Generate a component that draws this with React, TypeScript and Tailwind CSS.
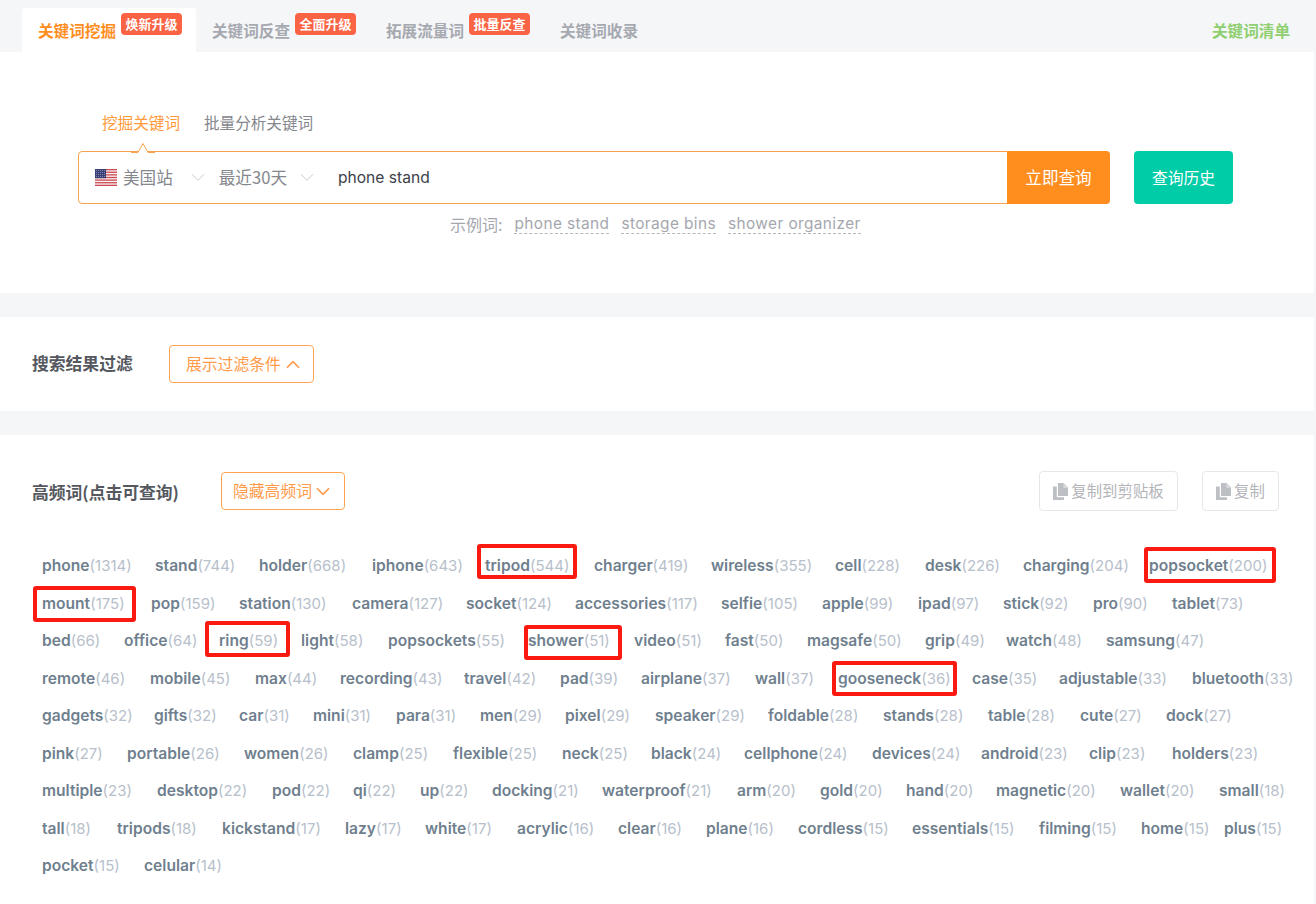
import React from "react";

const cjk = "font-['Noto_Sans_CJK_SC','Noto_Sans',sans-serif]";
const latin = "font-['Inter','Noto_Sans_CJK_SC',sans-serif]";

type W = [string, number, number];
const rows: W[][] = [
  [["phone",1314,42],["stand",744,155],["holder",668,259],["iphone",643,372],["tripod",544,485],["charger",419,594],["wireless",355,711],["cell",228,835],["desk",226,925],["charging",204,1023],["popsocket",200,1149]],
  [["mount",175,42],["pop",159,151],["station",130,239],["camera",127,352],["socket",124,466],["accessories",117,575],["selfie",105,721],["apple",99,822],["ipad",97,918],["stick",92,1003],["pro",90,1093],["tablet",73,1172]],
  [["bed",66,42],["office",64,124],["ring",59,219],["light",58,301],["popsockets",55,388],["shower",51,528],["video",51,634],["fast",50,725],["magsafe",50,807],["grip",49,925],["watch",48,1006],["samsung",47,1106]],
  [["remote",46,42],["mobile",45,150],["max",44,255],["recording",43,340],["travel",42,464],["pad",39,560],["airplane",37,641],["wall",37,755],["gooseneck",36,838],["case",35,972],["adjustable",33,1059],["bluetooth",33,1192]],
  [["gadgets",32,42],["gifts",32,154],["car",31,239],["mini",31,313],["para",31,396],["men",29,480],["pixel",29,565],["speaker",29,655],["foldable",28,768],["stands",28,883],["table",28,988],["cute",27,1080],["dock",27,1166]],
  [["pink",27,42],["portable",26,127],["women",26,244],["clamp",25,353],["flexible",25,453],["neck",25,562],["black",24,651],["cellphone",24,744],["devices",24,872],["android",23,981],["clip",23,1089],["holders",23,1172]],
  [["multiple",23,42],["desktop",22,157],["pod",22,272],["qi",22,353],["up",22,420],["docking",21,492],["waterproof",21,602],["arm",20,737],["gold",20,820],["hand",20,906],["magnetic",20,996],["wallet",20,1120],["small",18,1219]],
  [["tall",18,42],["tripods",18,117],["kickstand",17,222],["lazy",17,345],["white",17,425],["acrylic",16,517],["clear",16,618],["plane",16,706],["cordless",15,798],["essentials",15,912],["filming",15,1039],["home",15,1141],["plus",15,1224]],
  [["pocket",15,42],["celular",14,144]],
];

const boxes: Record<string, [number, number, number, number]> = {
  tripod: [-8, -3, 100, 35],
  popsocket: [-5, 0, 132, 36],
  mount: [-9, 1, 103, 36],
  ring: [-14, -1, 85, 36],
  shower: [-4, 3, 98, 35],
  gooseneck: [-6, 1, 125, 35],
};

function Flag() {
  const stripes = [0, 2, 4, 6, 8, 10, 12];
  return (
    <svg width="22" height="17" viewBox="0 0 22 17" className="shrink-0">
      <rect width="22" height="17" fill="#f7f3f3" />
      {stripes.map((i) => (
        <rect key={i} y={(i * 17) / 13} width="22" height={17 / 13} fill="#cf4a52" />
      ))}
      <rect width="11" height="9.2" fill="#3b3f78" />
      {[1.5, 3.5, 5.5, 7.5].map((y) =>
        [1.5, 3.5, 5.5, 7.5, 9.5].map((x) => <circle key={`${x}-${y}`} cx={x} cy={y} r="0.45" fill="#c9cbe0" />)
      )}
    </svg>
  );
}

function CopyIcon() {
  return (
    <svg width="15" height="17" viewBox="0 0 15 17" className="shrink-0" fill="#bcbfc4">
      <path d="M5 0h5.5L15 4.5V13H5z" />
      <path d="M0 3.5h3.8V14.2H11V17H0z" />
      <path d="M10.4 0.6V4.8H14.6" fill="#dcdee1" />
    </svg>
  );
}

function Caret({ up, thin }: { up?: boolean; thin?: boolean }) {
  return (
    <svg width="14" height="9" viewBox="0 0 14 9" className="shrink-0" fill="none">
      <path
        d={up ? "M1 7.8 7 1.6l6 6.2" : "M1 1.2 7 7.4l6-6.2"}
        stroke={thin ? "#c8ccd2" : "#ff9a4a"}
        strokeWidth={thin ? 1 : 1.6}
      />
    </svg>
  );
}

function Tab({ label, badge, active }: { label: string; badge?: string; active?: boolean }) {
  return (
    <div className={`flex h-[44px] w-[174px] shrink-0 items-start pl-4 rounded-t-[3px] ${active ? "bg-white" : ""}`}>
      <span className={`mt-[10px] text-[15.6px] leading-[24px] font-bold ${active ? "text-[#ff8e1f]" : "text-[#a6a9b0]"}`}>{label}</span>
      {badge && (
        <span className="ml-[5px] mt-[5px] flex h-[22px] w-[61px] items-center justify-center rounded-[4px] bg-[#fa6344] text-[13px] font-bold text-white">
          {badge}
        </span>
      )}
    </div>
  );
}

function Example({ children }: { children: string }) {
  return (
    <span className={`${latin} border-b border-dashed border-[#b5b7bd] text-[15.4px] leading-[18px] tracking-[0.4px] text-[#a5a7ae]`}>{children}</span>
  );
}

function Word({ w, next }: { w: W; next?: number }) {
  const box = boxes[w[0]];
  return (
    <div className="relative shrink-0 whitespace-nowrap" style={next ? { width: next - w[2] } : undefined}>
      <span className="text-[15.6px] font-semibold text-[#6f7f8e]">{w[0]}</span>
      <span className="font-normal text-[#b7c0cb]">({w[1]})</span>
      {box && (
        <div
          className="absolute rounded-[3px] border-[4px] border-[#fb1a10]"
          style={{ left: box[0], top: box[1], width: box[2], height: box[3] }}
        />
      )}
    </div>
  );
}

export default function App() {
  return (
    <div className={`${cjk} min-h-[904px] w-[1316px] overflow-hidden bg-[#f5f6f8]`}>
      <div className="flex h-[52px] items-end pl-[22px]">
        <Tab label="关键词挖掘" badge="焕新升级" active />
        <Tab label="关键词反查" badge="全面升级" />
        <Tab label="拓展流量词" badge="批量反查" />
        <Tab label="关键词收录" />
        <span className="mb-[10px] ml-auto mr-[26px] text-[15.6px] leading-[24px] font-bold text-[#8fcf6f]">关键词清单</span>
      </div>

      <section className="mr-[2px] h-[241px] bg-white pl-[78px] pt-[58px]">
        <div className="flex h-[41px] gap-6 pl-6 text-[15.6px] leading-[24px]">
          <span className="text-[#ff9a3d]">挖掘关键词</span>
          <span className="text-[#85878d]">批量分析关键词</span>
        </div>
        <div className="flex h-[53px] gap-6">
          <div className="relative flex w-[1032px] overflow-visible rounded-[4px] border border-[#f6a251]">
            <svg width="24" height="11" viewBox="0 0 24 11" className="absolute left-[52px] top-[-10px]">
              <path d="M0 10.5h7L12 1.5l5 9h7" fill="#fff" stroke="#f6a251" strokeWidth="1" />
            </svg>
            <div className="flex min-w-0 flex-1 items-center pl-4 text-[16.6px] text-[#85878d]">
              <Flag />
              <span className="ml-[6px]">美国站</span>
              <span className="ml-[18px]"><Caret thin /></span>
              <span className="ml-[14px]">最近30天</span>
              <span className="ml-[13px]"><Caret thin /></span>
              <span className="ml-[24px] font-['Inter',sans-serif] text-[15.6px] text-[#3c3f4a]">phone stand</span>
            </div>
            <button className="my-[-1px] mr-[-1px] flex w-[103px] items-center justify-center rounded-r-[4px] bg-[#ff8e1f] text-[16.6px] text-white">
              立即查询
            </button>
          </div>
          <button className="flex w-[99px] items-center justify-center rounded-[4px] bg-[#00cca8] text-[15.8px] text-white">
            查询历史
          </button>
        </div>
        <div className="mt-[8px] flex items-center gap-[12px] pl-[372px] text-[16px] text-[#a5a7ae]">
          <span>示例词:</span>
          <Example>phone stand</Example>
          <Example>storage bins</Example>
          <Example>shower organizer</Example>
        </div>
      </section>

      <section className="mr-[2px] mt-6 flex h-[94px] items-center bg-white pl-8">
        <h2 className="w-[137px] text-[16.8px] font-bold text-[#55585e]">搜索结果过滤</h2>
        <button className="flex h-[38px] w-[145px] items-center rounded-[4px] border border-[#ffa552] pl-4 text-[15.8px] text-[#ff9a4a]">
          展示过滤条件
          <span className="ml-[5px]"><Caret up /></span>
        </button>
      </section>

      <section className="mr-[2px] mt-6 min-h-[469px] bg-white">
        <div className="flex h-[112px] items-start pl-8 pt-[36px]">
          <h2 className="mt-[9px] w-[189px] text-[16.8px] leading-[24px] font-bold text-[#55585e]">高频词(点击可查询)</h2>
          <button className="mt-[1px] flex h-[38px] w-[124px] items-center rounded-[4px] border border-[#ffa552] pl-[11px] text-[15.8px] text-[#ff9a4a]">
            隐藏高频词
            <span className="ml-[4px]"><Caret /></span>
          </button>
          <button className="ml-[694px] flex h-[40px] w-[139px] items-center justify-center gap-[3px] rounded-[4px] border border-[#e5e7ec] text-[15.4px] text-[#b3b5ba]">
            <CopyIcon />
            复制到剪贴板
          </button>
          <button className="ml-6 flex h-[40px] w-[77px] items-center justify-center gap-[3px] rounded-[4px] border border-[#e5e7ec] text-[15.4px] text-[#b3b5ba]">
            <CopyIcon />
            复制
          </button>
        </div>
        <div className={`${latin} text-[15px] leading-[37.5px]`}>
          {rows.map((row, i) => (
            <div key={i} className="flex h-[37.5px] pl-[42px]">
              {row.map((w, j) => (
                <Word key={w[0]} w={w} next={row[j + 1]?.[2]} />
              ))}
            </div>
          ))}
        </div>
      </section>
    </div>
  );
}
